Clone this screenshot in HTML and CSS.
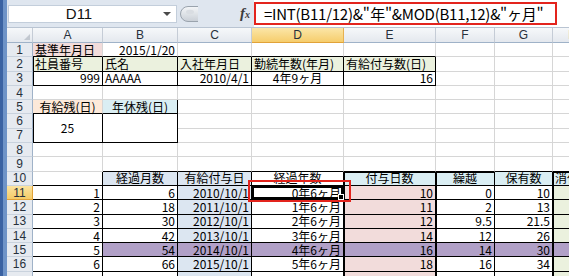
FILE: index.html
```html
<!DOCTYPE html>
<html lang="ja">
<head>
<meta charset="utf-8">
<title>Excel</title>
<link rel="stylesheet" href="styles.css">
</head>
<body>
<div class="app">
  <div class="strip"></div>
  <div class="main">
    <div class="fbar">
      <div class="namebox"><span class="nb-text">D11</span><span class="nb-arrow"></span></div>
      <div class="ctrl">
        <svg width="18" height="16" viewBox="0 0 18 16">
          <defs><linearGradient id="g1" x1="0" y1="0" x2="0" y2="1"><stop offset="0" stop-color="#f4f6f8"/><stop offset="1" stop-color="#c9cfd6"/></linearGradient></defs>
          <path d="M18 0.5 H8 A7.5 7.5 0 0 0 8 15.5 H18" fill="url(#g1)" stroke="#9aa3ad"/>
          <ellipse cx="10" cy="6" rx="4" ry="2.2" fill="#d9dde2"/>
        </svg>
      </div>
      <div class="fx"><span class="fx-f">f</span><span class="fx-x">x</span></div>
      <div class="formula"><div class="fbox">=INT(B11/12)&amp;"&#8202;年"&amp;MOD(B11,12)&amp;"ヶ月"</div></div>
    </div>
    <div class="sheet">
      <div class="grid">
        <!-- column headers -->
        <div class="ch corner"><span class="tri"></span></div>
        <div class="ch">A</div><div class="ch">B</div><div class="ch">C</div><div class="ch chs">D</div><div class="ch">E</div><div class="ch">F</div><div class="ch">G</div><div class="ch">H</div>

        <!-- row 1 -->
        <div class="rh">1</div>
        <div class="c l pink bB">基準年月日</div><div class="c r bB">2015/1/20</div><div class="c bB"></div><div class="c bB"></div><div class="c bB"></div><div class="c"></div><div class="c"></div><div class="c"></div>

        <!-- row 2 -->
        <div class="rh">2</div>
        <div class="c l green bR bB sL">社員番号</div><div class="c l green bR bB">氏名</div><div class="c l green bR bB">入社年月日</div><div class="c l green bR bB">勤続年数(年月)</div><div class="c l green bR bB">有給付与数(日)</div><div class="c"></div><div class="c"></div><div class="c"></div>

        <!-- row 3 -->
        <div class="rh">3</div>
        <div class="c r bR bB sL">999</div><div class="c l bR bB">AAAAA</div><div class="c r bR bB">2010/4/1</div><div class="c m bR bB">4年9ヶ月</div><div class="c r bR bB">16</div><div class="c"></div><div class="c"></div><div class="c"></div>

        <!-- row 4 -->
        <div class="rh">4</div>
        <div class="c"></div><div class="c"></div><div class="c"></div><div class="c"></div><div class="c"></div><div class="c"></div><div class="c"></div><div class="c"></div>

        <!-- row 5 -->
        <div class="rh">5</div>
        <div class="c m peach bB">有給残(日)</div><div class="c m cyan bB bR">年休残(日)</div><div class="c"></div><div class="c"></div><div class="c"></div><div class="c"></div><div class="c"></div><div class="c"></div>

        <!-- row 6 -->
        <div class="rh">6</div>
        <div class="c m bR bB sL span2">25</div><div class="c bR bB span2"></div><div class="c"></div><div class="c"></div><div class="c"></div><div class="c"></div><div class="c"></div><div class="c"></div>

        <!-- row 7 -->
        <div class="rh">7</div>
        <div class="c"></div><div class="c"></div><div class="c"></div><div class="c"></div><div class="c"></div><div class="c"></div>

        <!-- row 8 -->
        <div class="rh">8</div>
        <div class="c"></div><div class="c"></div><div class="c"></div><div class="c"></div><div class="c"></div><div class="c"></div><div class="c"></div><div class="c"></div>

        <!-- row 9 -->
        <div class="rh">9</div>
        <div class="c"></div><div class="c bB"></div><div class="c bB"></div><div class="c bB"></div><div class="c bB"></div><div class="c bB"></div><div class="c bB"></div><div class="c bB"></div>

        <!-- row 10 -->
        <div class="rh">10</div>
        <div class="c bR bB"></div>
        <div class="c m slate bR bB">経過月数</div>
        <div class="c m slate bR bB">有給付与日</div>
        <div class="c m bR bB">経過年数</div>
        <div class="c m cyan bR bB tLT">付与日数</div>
        <div class="c m cyan bR bB tLT">繰越</div>
        <div class="c m cyan bR bB">保有数</div>
        <div class="c l cyan bR bB tLT clip">消化日数</div>

        <!-- row 11 -->
        <div class="rh rhs">11</div>
        <div class="c r bR bB">1</div><div class="c r bR bB">6</div><div class="c r slate bR bB">2010/10/1</div>
        <div class="c r bR bB sel">0年6ヶ月<span class="handle"></span></div>
        <div class="c r pink bR bB tL">10</div><div class="c r bR bB tL">0</div><div class="c r bR bB">10</div><div class="c green bR bB tL"></div>

        <!-- row 12 -->
        <div class="rh">12</div>
        <div class="c r bR bB">2</div><div class="c r bR bB">18</div><div class="c r slate bR bB">2011/10/1</div><div class="c r bR bB">1年6ヶ月</div>
        <div class="c r pink bR bB tL">11</div><div class="c r bR bB tL">2</div><div class="c r bR bB">13</div><div class="c green bR bB tL"></div>

        <!-- row 13 -->
        <div class="rh">13</div>
        <div class="c r bR bB">3</div><div class="c r bR bB">30</div><div class="c r slate bR bB">2012/10/1</div><div class="c r bR bB">2年6ヶ月</div>
        <div class="c r pink bR bB tL">12</div><div class="c r bR bB tL">9.5</div><div class="c r bR bB">21.5</div><div class="c green bR bB tL"></div>

        <!-- row 14 -->
        <div class="rh">14</div>
        <div class="c r bR bB">4</div><div class="c r bR bB">42</div><div class="c r slate bR bB">2013/10/1</div><div class="c r bR bB">3年6ヶ月</div>
        <div class="c r pink bR bB tL">14</div><div class="c r bR bB tL">12</div><div class="c r bR bB">26</div><div class="c green bR bB tL"></div>

        <!-- row 15 -->
        <div class="rh">15</div>
        <div class="c r bR bB">5</div><div class="c r purple bR bB">54</div><div class="c r purple bR bB">2014/10/1</div><div class="c r purple bR bB">4年6ヶ月</div>
        <div class="c r purple bR bB tL">16</div><div class="c r purple bR bB tL">14</div><div class="c r purple bR bB">30</div><div class="c purple bR bB tL"></div>

        <!-- row 16 -->
        <div class="rh">16</div>
        <div class="c r bR bB">6</div><div class="c r bR bB">66</div><div class="c r slate bR bB">2015/10/1</div><div class="c r bR bB">5年6ヶ月</div>
        <div class="c r pink bR bB tL">18</div><div class="c r bR bB tL">16</div><div class="c r bR bB">34</div><div class="c green bR bB tL"></div>

        <!-- row 17 (only its top edge is visible) -->
        <div class="rh"></div>
        <div class="c bR bB"></div><div class="c bR bB"></div><div class="c slate bR bB"></div><div class="c bR bB"></div>
        <div class="c pink bR bB tL"></div><div class="c bR bB tL"></div><div class="c bR bB"></div><div class="c green bR bB tL"></div>
      </div>
      <div class="anno"></div>
    </div>
  </div>
</div>
</body>
</html>
```

FILE: styles.css
```css
* { box-sizing: border-box; margin: 0; padding: 0; }
html, body { width: 569px; height: 276px; overflow: hidden; background: #fff; }
body { font-family: "Noto Sans CJK JP", sans-serif; color: #000; }

.app { display: flex; height: 276px; }
.strip {
  width: 7px; flex: none;
  background: linear-gradient(to right, #3a62a2 0, #3a62a2 3px, #6e93c7 3px, #6e93c7 7px);
}
.main { flex: 1; min-width: 0; display: flex; flex-direction: column; }

/* formula bar */
.fbar {
  height: 28px; flex: none; display: flex; align-items: center;
  background: #dfe6ef; border-bottom: 1px solid #b9c4d2;
}
.namebox {
  margin-left: 1px; width: 169px; height: 18px; background: #fff;
  border: 1px solid #c3cedb; display: flex; align-items: center;
}
.nb-text { flex: 1; text-align: center; padding-right: 14px; font-family: "Liberation Sans", sans-serif; font-size: 15px; line-height: 1; color: #111; }
.nb-arrow {
  width: 0; height: 0; margin-right: 5px;
  border-left: 4px solid transparent; border-right: 4px solid transparent; border-top: 4px solid #4a4a4a;
}
.ctrl { margin-left: 3px; width: 18px; height: 16px; display: flex; }
.fx { margin-left: 42px; width: 14px; font-family: "Liberation Serif", serif; font-style: italic; font-weight: bold; color: #3c3c3c; display: flex; align-items: baseline; line-height: 1; }
.fx-f { font-size: 15px; }
.fx-x { font-size: 10px; }
.formula { flex: 1; align-self: stretch; background: #fff; display: flex; align-items: flex-start; padding-top: 2px; }
.fbox {
  width: 303px; height: 23px; border: 2px solid #e3241d;
  display: flex; align-items: center; padding-left: 8px;
  font-family: "Noto Sans CJK JP", sans-serif; font-size: 15px; line-height: 1; letter-spacing: -0.25px; color: #000; white-space: nowrap;
}

/* sheet */
.sheet { position: relative; flex: 1; overflow: hidden; }
.grid {
  display: grid;
  grid-template-columns: 26px 70px 75px 74px 92px 92px 59px 58px 40px;
  grid-template-rows: 15px repeat(16, 14.3px) 20px;
}
.ch {
  background: linear-gradient(#f6f8fa, #e4e8ee);
  border-right: 1px solid #c5ccd6; border-bottom: 1px solid #9fb2c8;
  display: flex; align-items: center; justify-content: center;
  font-family: "Liberation Sans", sans-serif; font-size: 12px; line-height: 1; color: #27303b;
}
.chs { background: linear-gradient(#fbe6a8, #f6cd6c); border-bottom-color: #e1a238; border-right-color: #e7b150; }
.corner { position: relative; }
.tri {
  position: absolute; right: 2px; bottom: 2px; width: 0; height: 0;
  border-left: 6px solid transparent; border-bottom: 6px solid #c2c8d0;
}
.rh {
  background: #e6eaf0; border-right: 1px solid #9fb2c8; border-bottom: 1px solid #c9d2dd;
  display: flex; align-items: center; justify-content: center;
  font-family: "Liberation Sans Narrow", "Liberation Sans", sans-serif; font-size: 12px; line-height: 1; color: #27303b;
}
.rhs { background: linear-gradient(#fbe3a0, #f5cb67); border-color: #e1a238; }

.c {
  border-right: 1px solid #d6d6d6; border-bottom: 1px solid #d6d6d6;
  display: flex; align-items: center; padding: 0 2px; white-space: nowrap;
  font-family: "Liberation Sans Narrow", "Noto Sans CJK JP", sans-serif; font-size: 12px; line-height: 1;
  position: relative;
}
.clip { overflow: hidden; }
.l { justify-content: flex-start; }
.r { justify-content: flex-end; }
.m { justify-content: center; }
.span2 { grid-row: span 2; }
.bR { border-right-color: #000; }
.bB { border-bottom-color: #000; }
.sL { box-shadow: inset 1px 0 0 #000; }
.tL { box-shadow: inset 1px 0 0 #000; }
.tLT { box-shadow: inset 1px 1px 0 #000; }

.pink { background: #f2dcdb; }
.green { background: #ebf1de; }
.peach { background: #fde9d9; }
.cyan { background: #daeef3; }
.slate { background: #dce6f1; }
.purple { background: #b1a0c7; }

.sel { box-shadow: inset 0 0 0 2px #000; }
.handle {
  position: absolute; right: -1px; bottom: -1px; width: 6px; height: 6px;
  background: #000; border: 1px solid #fff;
}
.anno {
  position: absolute; left: 241px; top: 152px; width: 103px; height: 22px;
  border: 2px solid #e3241d;
}
```
